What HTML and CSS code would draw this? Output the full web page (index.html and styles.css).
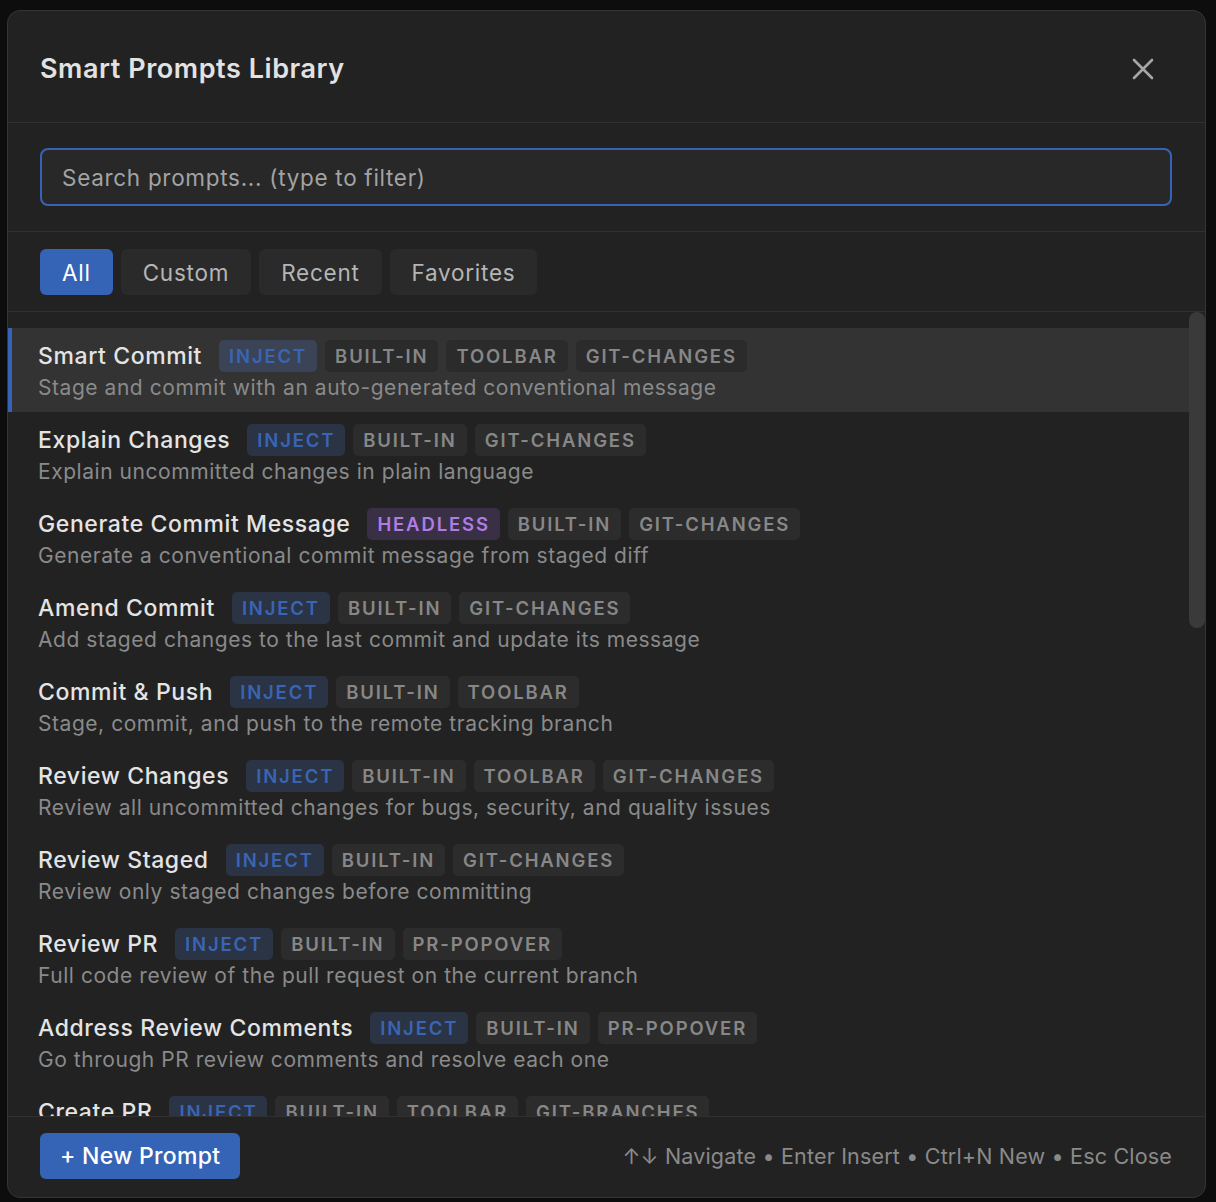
FILE: index.html
```html
<!DOCTYPE html>
<html lang="en">
<head>
<meta charset="utf-8">
<title>Smart Prompts Library</title>
<link rel="stylesheet" href="styles.css">
</head>
<body>
<div class="modal">
  <header class="modal-header">
    <h1 class="modal-title">Smart Prompts Library</h1>
    <button class="close-btn" aria-label="Close">
      <svg width="22" height="22" viewBox="0 0 22 22"><path d="M2 2 L20 20 M20 2 L2 20" stroke="#a6a6a6" stroke-width="2.6" stroke-linecap="round" fill="none"/></svg>
    </button>
  </header>
  <div class="search-section">
    <div class="search-box">Search prompts... (type to filter)</div>
  </div>
  <nav class="tabs">
    <span class="tab active">All</span>
    <span class="tab">Custom</span>
    <span class="tab">Recent</span>
    <span class="tab">Favorites</span>
  </nav>
  <div class="list-wrap">
    <div class="list">
      <div class="item selected">
        <div class="item-head"><span class="item-title">Smart Commit</span><span class="badge inject">INJECT</span><span class="badge">BUILT-IN</span><span class="badge">TOOLBAR</span><span class="badge">GIT-CHANGES</span></div>
        <div class="item-desc">Stage and commit with an auto-generated conventional message</div>
      </div>
      <div class="item">
        <div class="item-head"><span class="item-title">Explain Changes</span><span class="badge inject">INJECT</span><span class="badge">BUILT-IN</span><span class="badge">GIT-CHANGES</span></div>
        <div class="item-desc">Explain uncommitted changes in plain language</div>
      </div>
      <div class="item">
        <div class="item-head"><span class="item-title">Generate Commit Message</span><span class="badge headless">HEADLESS</span><span class="badge">BUILT-IN</span><span class="badge">GIT-CHANGES</span></div>
        <div class="item-desc">Generate a conventional commit message from staged diff</div>
      </div>
      <div class="item">
        <div class="item-head"><span class="item-title">Amend Commit</span><span class="badge inject">INJECT</span><span class="badge">BUILT-IN</span><span class="badge">GIT-CHANGES</span></div>
        <div class="item-desc">Add staged changes to the last commit and update its message</div>
      </div>
      <div class="item">
        <div class="item-head"><span class="item-title">Commit &amp; Push</span><span class="badge inject">INJECT</span><span class="badge">BUILT-IN</span><span class="badge">TOOLBAR</span></div>
        <div class="item-desc">Stage, commit, and push to the remote tracking branch</div>
      </div>
      <div class="item">
        <div class="item-head"><span class="item-title">Review Changes</span><span class="badge inject">INJECT</span><span class="badge">BUILT-IN</span><span class="badge">TOOLBAR</span><span class="badge">GIT-CHANGES</span></div>
        <div class="item-desc">Review all uncommitted changes for bugs, security, and quality issues</div>
      </div>
      <div class="item">
        <div class="item-head"><span class="item-title">Review Staged</span><span class="badge inject">INJECT</span><span class="badge">BUILT-IN</span><span class="badge">GIT-CHANGES</span></div>
        <div class="item-desc">Review only staged changes before committing</div>
      </div>
      <div class="item">
        <div class="item-head"><span class="item-title">Review PR</span><span class="badge inject">INJECT</span><span class="badge">BUILT-IN</span><span class="badge">PR-POPOVER</span></div>
        <div class="item-desc">Full code review of the pull request on the current branch</div>
      </div>
      <div class="item">
        <div class="item-head"><span class="item-title">Address Review Comments</span><span class="badge inject">INJECT</span><span class="badge">BUILT-IN</span><span class="badge">PR-POPOVER</span></div>
        <div class="item-desc">Go through PR review comments and resolve each one</div>
      </div>
      <div class="item">
        <div class="item-head"><span class="item-title">Create PR</span><span class="badge inject">INJECT</span><span class="badge">BUILT-IN</span><span class="badge">TOOLBAR</span><span class="badge">GIT-BRANCHES</span></div>
        <div class="item-desc">Create a pull request for the current branch</div>
      </div>
    </div>
    <div class="scrollbar"><div class="thumb"></div></div>
  </div>
  <footer class="modal-footer">
    <button class="new-btn">+ New Prompt</button>
    <span class="hints">↑↓ Navigate • Enter Insert • Ctrl+N New • Esc Close</span>
  </footer>
</div>
</body>
</html>
```

FILE: styles.css
```css
* { box-sizing: border-box; }
html, body { margin: 0; padding: 0; }
body {
  background: #0d0d0d;
  width: 1216px;
  height: 1202px;
  overflow: hidden;
  padding: 10px 0 0 7px;
  font-family: Inter, "Noto Sans", "Liberation Sans", sans-serif;
}
.modal {
  width: 1199px;
  height: 1188px;
  background: #222222;
  border: 1px solid #353535;
  border-radius: 13px;
  display: flex;
  flex-direction: column;
  overflow: hidden;
}
.modal-header {
  height: 112px;
  flex: none;
  display: flex;
  align-items: center;
  justify-content: space-between;
  padding: 3px 51px 0 32px;
  border-bottom: 1px solid #303030;
}
.modal-title {
  margin: 0;
  font-size: 27px;
  font-weight: 600;
  color: #e2e2e2;
  letter-spacing: 0.55px;
}
.close-btn {
  background: none;
  border: 0;
  padding: 0;
  width: 22px;
  height: 22px;
  margin-top: 2px;
  display: flex;
}
.search-section {
  flex: none;
  padding: 25px 33px 25px 32px;
  border-bottom: 1px solid #303030;
}
.search-box {
  height: 58px;
  border: 2px solid #3663b6;
  border-radius: 8px;
  background: #282828;
  display: flex;
  align-items: center;
  padding-left: 20px;
  font-size: 22.5px;
  letter-spacing: 0.7px;
  color: #a3a3a3;
}
.tabs {
  flex: none;
  display: flex;
  gap: 8px;
  padding: 17px 32px 16px;
  border-bottom: 1px solid #303030;
}
.tab {
  height: 46px;
  padding: 0 22px;
  border-radius: 6px;
  background: #2a2a2a;
  color: #b5b5b5;
  font-size: 22.5px;
  letter-spacing: 0.75px;
  display: flex;
  align-items: center;
}
.tab.active {
  background: #3563b5;
  color: #ffffff;
}
.list-wrap {
  flex: 1;
  min-height: 0;
  display: flex;
  border-bottom: 1px solid #303030;
}
.list {
  flex: 1;
  min-width: 0;
  overflow: hidden;
  padding-top: 16px;
}
.scrollbar {
  width: 16px;
  flex: none;
}
.thumb {
  height: 316px;
  border-radius: 8px;
  background: #3a3a3a;
}
.item {
  height: 84px;
  padding: 12px 20px 0 26px;
  border-left: 4px solid transparent;
}
.item.selected {
  background: #333333;
  border-left-color: #3563b5;
}
.item-head {
  display: flex;
  align-items: center;
  height: 32px;
  gap: 8px;
}
.item-title {
  font-size: 23px;
  font-weight: 500;
  letter-spacing: 0.6px;
  color: #e4e4e4;
  margin-right: 9px;
  white-space: nowrap;
}
.badge {
  height: 32px;
  padding: 0 10px;
  border-radius: 5px;
  background: #2c2c2c;
  color: #878787;
  font-size: 18.5px;
  font-weight: 600;
  letter-spacing: 1.85px;
  display: flex;
  align-items: center;
  white-space: nowrap;
}
.selected .badge { background: #2b2b2b; }
.badge.inject {
  background: #2a3445;
  color: #3a64b4;
}
.selected .badge.inject { background: #3a4456; }
.badge.headless {
  background: #3a3046;
  color: #b07ce4;
}
.item-desc {
  margin-top: 3px;
  font-size: 21px;
  line-height: 26px;
  letter-spacing: 0.55px;
  color: #8a8a8a;
  white-space: nowrap;
}
.modal-footer {
  flex: none;
  height: 80px;
  display: flex;
  align-items: center;
  justify-content: space-between;
  padding: 0 33px 3px 32px;
}
.new-btn {
  height: 46px;
  padding: 0 20px;
  border: 0;
  border-radius: 6px;
  background: #3563b5;
  color: #ffffff;
  font-family: inherit;
  font-size: 23px;
  font-weight: 500;
  letter-spacing: 0.3px;
}
.hints {
  font-size: 21.5px;
  letter-spacing: 0.18px;
  color: #8a8a8a;
}
```
